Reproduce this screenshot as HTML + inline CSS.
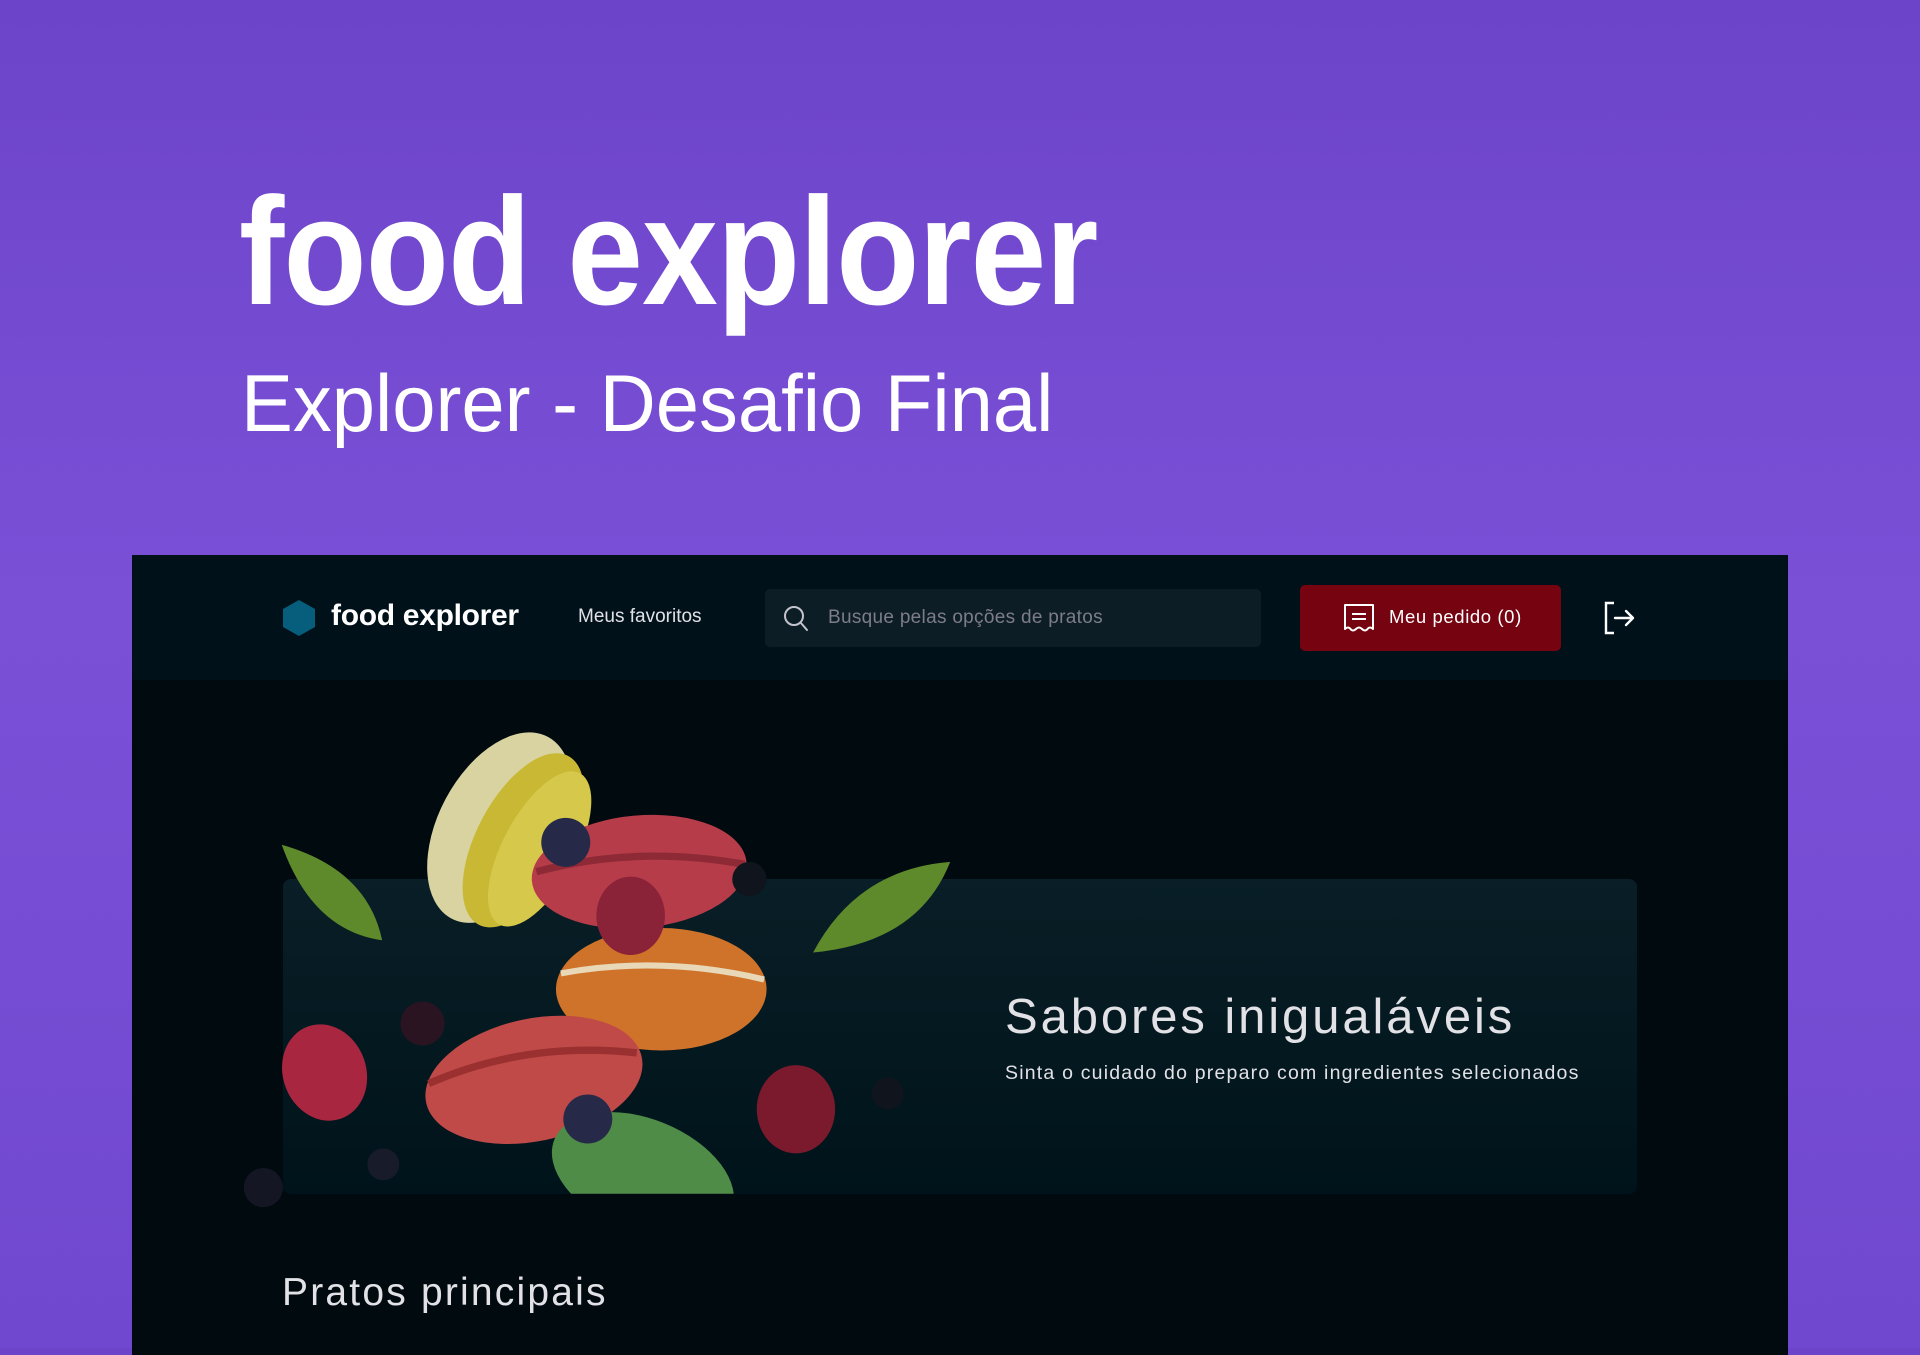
<!DOCTYPE html>
<html><head><meta charset="utf-8"><style>
*{margin:0;padding:0;box-sizing:border-box}
body{width:1920px;height:1348px;overflow:hidden;position:relative;background:linear-gradient(180deg,#6c44c9 0%,#7a50d7 45%,#7048cf 100%);font-family:"Liberation Sans",sans-serif}
.t1{position:absolute;left:239px;top:164px;font-size:153px;font-weight:bold;color:#fff;white-space:nowrap;transform:scaleX(.89);transform-origin:left top;letter-spacing:-1px}
.t2{position:absolute;left:241px;top:358px;font-size:81px;color:#fff;white-space:nowrap;transform:scaleX(.96);transform-origin:left top}
.panel{position:absolute;left:132px;top:555px;width:1656px;height:800px;background:#000a0f}
.hdr{position:absolute;left:0;top:0;width:100%;height:125px;background:#00111a}
.hex{position:absolute;left:151px;top:45px}
.logo{position:absolute;left:199px;top:44px;font-size:30px;font-weight:bold;color:#fff;letter-spacing:-.3px}
.fav{position:absolute;left:446px;top:51px;font-size:19px;color:#e1e1e6}
.search{position:absolute;left:633px;top:34px;width:496px;height:58px;background:#0d1d25;border-radius:5px}
.search span{position:absolute;left:63px;top:18px;font-size:19px;color:#7c7c8a;white-space:nowrap;letter-spacing:.3px}
.btn{position:absolute;left:1168px;top:30px;width:261px;height:66px;background:#750310;border-radius:5px}
.btn span{position:absolute;left:89px;top:21px;font-size:18.5px;color:#fff;white-space:nowrap;letter-spacing:.6px}
.banner{position:absolute;left:151px;top:324px;width:1354px;height:315px;border-radius:8px;background:linear-gradient(180deg,#091e26,#00131b)}
.h2{position:absolute;left:873px;top:434px;font-size:49px;color:#e1e1e6;white-space:nowrap;letter-spacing:2.9px}
.p{position:absolute;left:873px;top:507px;font-size:19.5px;color:#e1e1e6;white-space:nowrap;letter-spacing:1.2px}
.h3{position:absolute;left:150px;top:716px;font-size:39px;color:#e1e1e6;white-space:nowrap;letter-spacing:2.2px}
svg.food{position:absolute;left:0;top:0}
</style></head><body>
<div class="t1">food explorer</div>
<div class="t2">Explorer - Desafio Final</div>
<div class="panel">
 <div class="hdr">
  <svg class="hex" width="32" height="36" viewBox="0 0 32 36"><polygon points="16,0 32,9 32,27 16,36 0,27 0,9" fill="#065e7c"/></svg>
  <div class="logo">food explorer</div>
  <div class="fav">Meus favoritos</div>
  <div class="search">
   <svg style="position:absolute;left:18px;top:16px" width="26" height="28" viewBox="0 0 26 28"><circle cx="11" cy="11" r="9" fill="none" stroke="#c4c4cc" stroke-width="2"/><line x1="17.5" y1="17.5" x2="24" y2="25" stroke="#c4c4cc" stroke-width="2" stroke-linecap="round"/></svg>
   <span>Busque pelas opções de pratos</span>
  </div>
  <div class="btn">
   <svg style="position:absolute;left:43px;top:18px" width="32" height="30" viewBox="0 0 32 30"><path d="M2 2 H30 V26 Q27 23 24.5 26 Q22 29 19 26 Q16 23 13 26 Q10 29 7.5 26 Q5 23 2 26 Z" fill="none" stroke="#fff" stroke-width="2" stroke-linejoin="round"/><line x1="9" y1="11" x2="23" y2="11" stroke="#fff" stroke-width="2"/><line x1="9" y1="16" x2="23" y2="16" stroke="#fff" stroke-width="2"/></svg>
   <span>Meu pedido (0)</span>
  </div>
  <svg style="position:absolute;left:1471px;top:46px" width="34" height="34" viewBox="0 0 34 34"><path d="M11 2 H3 V32 H11" fill="none" stroke="#fff" stroke-width="2.4"/><path d="M12 17 H30 M23 10 L30 17 L23 24" fill="none" stroke="#fff" stroke-width="2.4" stroke-linecap="round" stroke-linejoin="round"/></svg>
 </div>
 <div class="banner"></div>
 <div class="h2">Sabores inigualáveis</div>
 <div class="p">Sinta o cuidado do preparo com ingredientes selecionados</div>
 <div class="h3">Pratos principais</div>
</div>
<svg class="food" width="1920" height="1348" viewBox="0 0 1568 1101">
 <defs><clipPath id="c"><rect x="150" y="580" width="700" height="395"/></clipPath></defs>
 <g clip-path="url(#c)">
  <path d="M230 690 Q300 710 312 768 Q255 760 230 690Z" fill="#5e8a2c"/>
  <path d="M776 704 Q700 710 664 778 Q750 770 776 704Z" fill="#5e8a2c"/>
  <g transform="rotate(28 408 676)"><ellipse cx="408" cy="676" rx="50" ry="84" fill="#d8d3a0"/><ellipse cx="430" cy="676" rx="38" ry="78" fill="#c8b834"/><ellipse cx="445" cy="676" rx="30" ry="70" fill="#d6c84a"/></g>
  <ellipse cx="522" cy="712" rx="88" ry="46" fill="#b63c4a" transform="rotate(-5 522 712)"/>
  <path d="M438 712 Q520 690 608 706" stroke="#8e2a36" stroke-width="6" fill="none"/>
  <ellipse cx="540" cy="808" rx="86" ry="50" fill="#d0732a"/>
  <path d="M458 795 Q540 780 624 800" stroke="#e8d8b8" stroke-width="5" fill="none"/>
  <ellipse cx="436" cy="882" rx="90" ry="50" fill="#c04a48" transform="rotate(-12 436 882)"/>
  <path d="M350 885 Q430 850 520 860" stroke="#9a3030" stroke-width="6" fill="none"/>
  <ellipse cx="525" cy="960" rx="78" ry="46" fill="#4f8c48" transform="rotate(22 525 960)"/>
  <ellipse cx="515" cy="748" rx="28" ry="32" fill="#8a2238"/>
  <ellipse cx="265" cy="876" rx="34" ry="40" fill="#a82640" transform="rotate(-20 265 876)"/>
  <ellipse cx="650" cy="906" rx="32" ry="36" fill="#7a1a2c"/>
  <circle cx="462" cy="688" r="20" fill="#262a48"/>
  <circle cx="480" cy="914" r="20" fill="#262a48"/>
  <circle cx="345" cy="836" r="18" fill="#2a1422"/>
  <circle cx="725" cy="893" r="13" fill="#10141c"/>
  <circle cx="612" cy="718" r="14" fill="#10141c"/>
  <circle cx="313" cy="951" r="13" fill="#181c2a"/>
 </g>
 <circle cx="215" cy="970" r="16" fill="#141624"/>
</svg>
</body></html>
